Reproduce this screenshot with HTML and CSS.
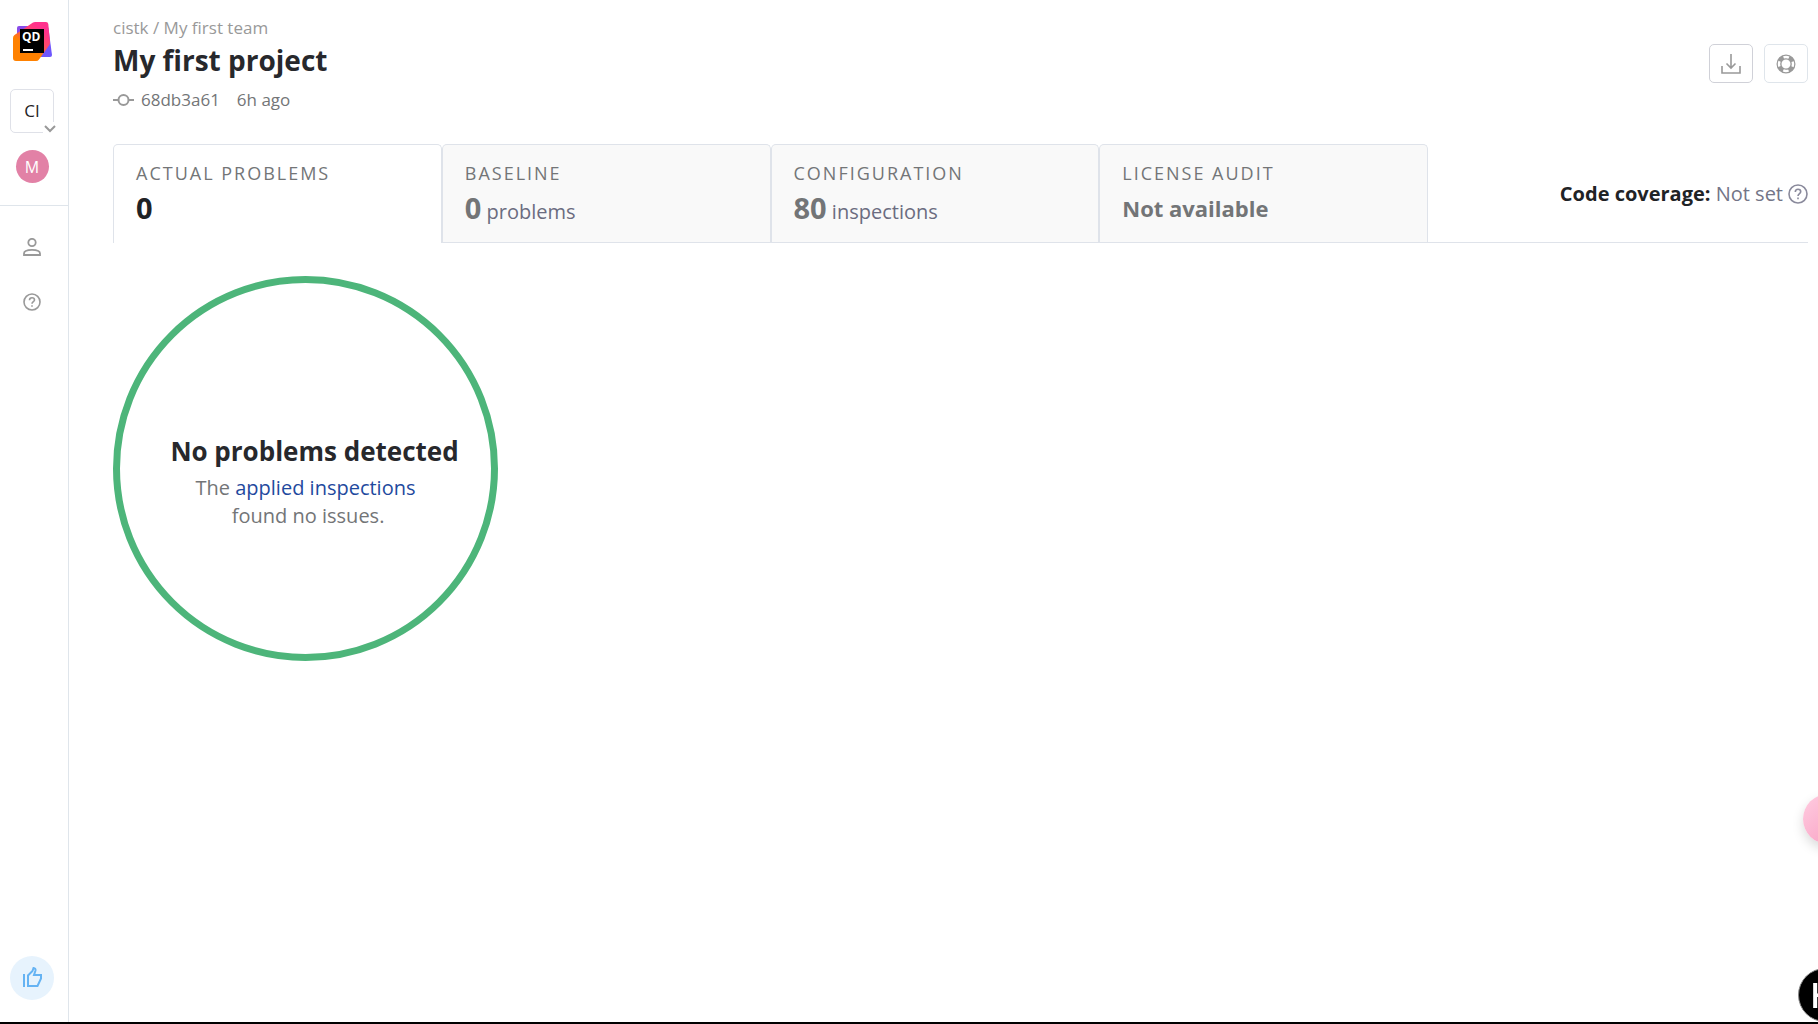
FILE: index.html
```html
<!DOCTYPE html>
<html lang="en">
<head>
<meta charset="utf-8">
<meta name="viewport" content="width=device-width, initial-scale=1">
<title>My first project</title>
<link rel="stylesheet" href="styles.css">
</head>
<body>
<div class="app">
  <aside class="sidebar">
    <div class="sidebar-top">
      <a class="logo" href="#" aria-label="Home">
        <svg width="39" height="39" viewBox="0 0 39 39">
          <defs>
            <linearGradient id="violet" x1="0" y1="0" x2="1" y2="1"><stop offset="0" stop-color="#8a4be8"/><stop offset="1" stop-color="#6b57ff"/></linearGradient>
            <linearGradient id="flame" gradientUnits="userSpaceOnUse" x1="28" y1="6" x2="12" y2="28"><stop offset="0" stop-color="#ff318c"/><stop offset="0.450" stop-color="#ff4a68"/><stop offset="0.850" stop-color="#ff8100"/></linearGradient>
          </defs>
          <path d="M6 4h27q2 0 2.400 2L39 33q0 2-2 2H22L4 20V6q0-2 2-2z" fill="url(#violet)"/>
          <path d="M20 .6q1-.6 2-.6h11q2 0 2.300 2L37 20q0 2-1 3.500L26 37.500Q25 39 23 39H3q-3 0-3-3V16q0-2 1.500-3z" fill="url(#flame)"/>
          <path d="M7 7h24v24H7z"/>
          <path d="M10 27h10v2H10z" fill="#fff"/>
          <text class="logo-text" x="9" y="19">QD</text>
        </svg>
      </a>
      <button class="org" aria-label="Switch organization">CI
        <svg class="org-chevron" width="14" height="14" viewBox="0 0 14 14"><path d="M2 4l5 5 5-5" fill="none" stroke="#999" stroke-width="2"/></svg>
      </button>
      <button class="avatar" aria-label="My first team">M</button>
    </div>
    <nav class="sidebar-nav">
      <a href="#" aria-label="Members">
        <svg width="18" height="18" viewBox="0 0 18 18" fill="none" stroke="#999" stroke-width="1.800"><circle cx="9" cy="4.500" r="3.700"/><path d="M1 17v-1.500C1 13 4 11.800 9 11.800s8 1.200 8 3.700V17z"/></svg>
      </a>
      <a href="#" aria-label="Help">
        <svg width="18" height="18" viewBox="0 0 18 18" fill="none" stroke="#999" stroke-width="1.600"><circle cx="9" cy="9" r="8"/><path d="M6.500 7.200C6.500 5.600 7.600 4.800 9 4.800s2.500.9 2.500 2.200C11.500 8.600 9 8.600 9 10.800M9 12.200v1.600"/></svg>
      </a>
    </nav>
    <button class="feedback" aria-label="Send feedback">
      <svg width="20" height="24" viewBox="0 0 20 24" fill="none" stroke="#65b3f3" stroke-width="2"><path d="M2 8v13M6 20V9.500L10.500 5l1-3q2.500.3 2 2.500L12 9H19v3.500L15.500 20z"/></svg>
    </button>
  </aside>

  <main class="content">
    <header class="page-header">
      <div class="heading">
        <div class="breadcrumbs"><a href="#">cistk</a> / <a href="#">My first team</a></div>
        <h1>My first project</h1>
        <div class="commit">
          <svg width="21" height="14" viewBox="0 0 21 14" fill="none" stroke="#999" stroke-width="2"><circle cx="10.500" cy="7" r="5"/><path d="M0 7h5.500M15.500 7H21"/></svg>
          <span class="hash">68db3a61</span>
          <span>6h ago</span>
        </div>
      </div>
      <div class="actions">
        <button class="action action-download" aria-label="Download">
          <svg width="20" height="20" viewBox="0 0 20 20" fill="none" stroke="#999" stroke-width="1.600"><path d="M10 0v14M5.500 9.500L10 14l4.500-4.500M1 12v7h18v-7"/></svg>
        </button>
        <button class="action" aria-label="Support">
          <svg width="20" height="20" viewBox="0 0 20 20" fill="none"><circle cx="10" cy="10" r="7" stroke="#999" stroke-width="5"/><circle cx="10" cy="10" r="7" stroke="#fff" stroke-width="2.400" stroke-dasharray="5.500 5.500" stroke-dashoffset="2.750"/></svg>
        </button>
      </div>
    </header>

    <div class="summary">
      <nav class="tabs">
        <a class="tab tab-active" href="#"><span class="tab-label">ACTUAL PROBLEMS</span><span class="tab-value"><b>0</b></span></a>
        <a class="tab" href="#"><span class="tab-label">BASELINE</span><span class="tab-value"><b>0</b> problems</span></a>
        <a class="tab" href="#"><span class="tab-label">CONFIGURATION</span><span class="tab-value"><b>80</b> inspections</span></a>
        <a class="tab" href="#"><span class="tab-label">LICENSE AUDIT</span><span class="tab-value tab-status">Not available</span></a>
      </nav>
      <div class="coverage">
        <span><b>Code coverage:</b> Not set</span>
        <svg width="20" height="20" viewBox="0 0 20 20" fill="none" stroke="#8a8a9c" stroke-width="1.600"><circle cx="10" cy="10" r="9"/><path d="M7.300 8C7.300 6.300 8.500 5.300 10 5.300s2.700 1 2.700 2.400C12.700 9.500 10 9.600 10 12M10 13.500v1.700"/></svg>
      </div>
    </div>

    <section class="result">
      <h2>No problems detected</h2>
      <p>The <a href="#">applied inspections</a><br>&nbsp;found no issues.</p>
    </section>
  </main>
</div>
<button class="bubble bubble-pink" aria-label="Assistant"></button>
<button class="bubble bubble-dark" aria-label="Open H">H</button>
</body>
</html>
```
FILE: styles.css
```css
* { box-sizing: border-box; }

body {
  margin: 0;
  overflow: hidden;
  background: #fff;
  color: #737577;
  font-family: "Open Sans", "Noto Sans", sans-serif;
  font-size: 18px;
  line-height: 28px;
}

a { color: inherit; text-decoration: none; }
button { padding: 0; border: 0; background: none; font: inherit; cursor: pointer; }
svg { display: block; flex: none; }

.app {
  display: flex;
  min-height: 100vh;
  border-bottom: 2px solid #000;
}

.sidebar {
  display: flex;
  flex-direction: column;
  flex: none;
  width: 69px;
  padding-bottom: 22px;
  border-right: 1px solid #dfe5eb;
}

.sidebar-top {
  display: flex;
  flex-direction: column;
  align-items: center;
  padding: 22px 4px 22px 0;
  border-bottom: 1px solid #dfe5eb;
}

.logo-text { fill: #fff; font-size: 12px; font-weight: 700; }

.org {
  position: relative;
  width: 44px;
  height: 44px;
  margin-top: 28px;
  border: 1px solid #dfe1e8;
  border-radius: 5px;
  color: #1f2326;
  font-size: 17px;
}

.org-chevron {
  position: absolute;
  right: -4px;
  bottom: -4px;
  background: #fff;
}

.avatar {
  width: 33px;
  height: 33px;
  margin-top: 17px;
  border-radius: 50%;
  background: #e281a6;
  color: #fff;
  font-size: 16px;
}

.sidebar-nav {
  display: flex;
  flex-direction: column;
  align-items: center;
  gap: 37px;
  padding: 32px 4px 0 0;
}

.feedback {
  display: grid;
  place-items: center;
  width: 44px;
  height: 44px;
  margin: auto 0 0 10px;
  border-radius: 50%;
  background: #e7f3fd;
}

.content {
  flex: 1;
  min-width: 0;
  padding: 14px 10px 0 44px;
}

.page-header {
  display: flex;
  justify-content: space-between;
  padding-bottom: 30px;
}

.breadcrumbs { color: #999; font-size: 17px; }

h1, h2 {
  margin: 0;
  color: #27282c;
  font-weight: 700;
}

h1 { font-size: 28px; line-height: 36px; }

.commit {
  display: flex;
  align-items: center;
  margin-top: 8px;
  font-size: 17px;
}

.hash { margin: 0 17px 0 7px; }

.actions { display: flex; gap: 11px; padding-top: 30px; }

.action {
  display: grid;
  place-items: center;
  width: 44px;
  height: 39px;
  border: 1px solid #dfe5eb;
  border-radius: 5px;
}

.action-download { border-color: #d0d1d8; }

.summary {
  display: flex;
  justify-content: space-between;
  border-bottom: 1px solid #dfe3ea;
}

.tabs { display: flex; flex: 0 1 1315px; }

.tab {
  display: flex;
  flex: 1;
  flex-direction: column;
  height: 98px;
  padding: 14px 22px;
  border: 1px solid #dfe3ea;
  border-bottom: 0;
  border-radius: 5px 5px 0 0;
  background: #f9f9f9;
}

.tab-active { height: 99px; margin-bottom: -1px; background: #fff; }
.tab-label { font-size: 18px; letter-spacing: 2px; }
.tab-value { color: #6b6c80; font-size: 20px; line-height: 42px; }
.tab-value b { color: #737577; font-size: 29px; }
.tab-active b { color: #1f2326; }
.tab-value.tab-status { color: #737577; font-size: 22px; font-weight: 700; }

.coverage {
  display: flex;
  align-items: center;
  gap: 5px;
  padding-top: 2px;
  color: #737587;
  font-size: 20px;
}

.coverage b { color: #1f2326; }

.result {
  display: flex;
  flex-direction: column;
  align-items: center;
  justify-content: center;
  width: 385px;
  aspect-ratio: 1;
  margin-top: 33px;
  padding-top: 25px;
  border: 7px solid #4db57a;
  border-radius: 50%;
}

h2 { padding-left: 18px; font-size: 26px; line-height: 36px; }

.result p { margin: 5px 0 0; font-size: 20px; text-align: center; }
.result p a { color: #1f4a9e; }

.bubble { position: fixed; border-radius: 50%; }

.bubble-pink {
  right: -35px;
  bottom: 180px;
  width: 50px;
  height: 50px;
  background: linear-gradient(135deg, #ffcce0, #f79abf);
  box-shadow: 0 5px 12px rgba(0, 0, 0, 0.15);
}

.bubble-dark {
  right: -34px;
  bottom: 2px;
  width: 54px;
  height: 54px;
  padding-left: 11px;
  border: 1px solid #888;
  background: #000;
  color: #fff;
  font-size: 34px;
  font-weight: 600;
  text-align: left;
}
```
